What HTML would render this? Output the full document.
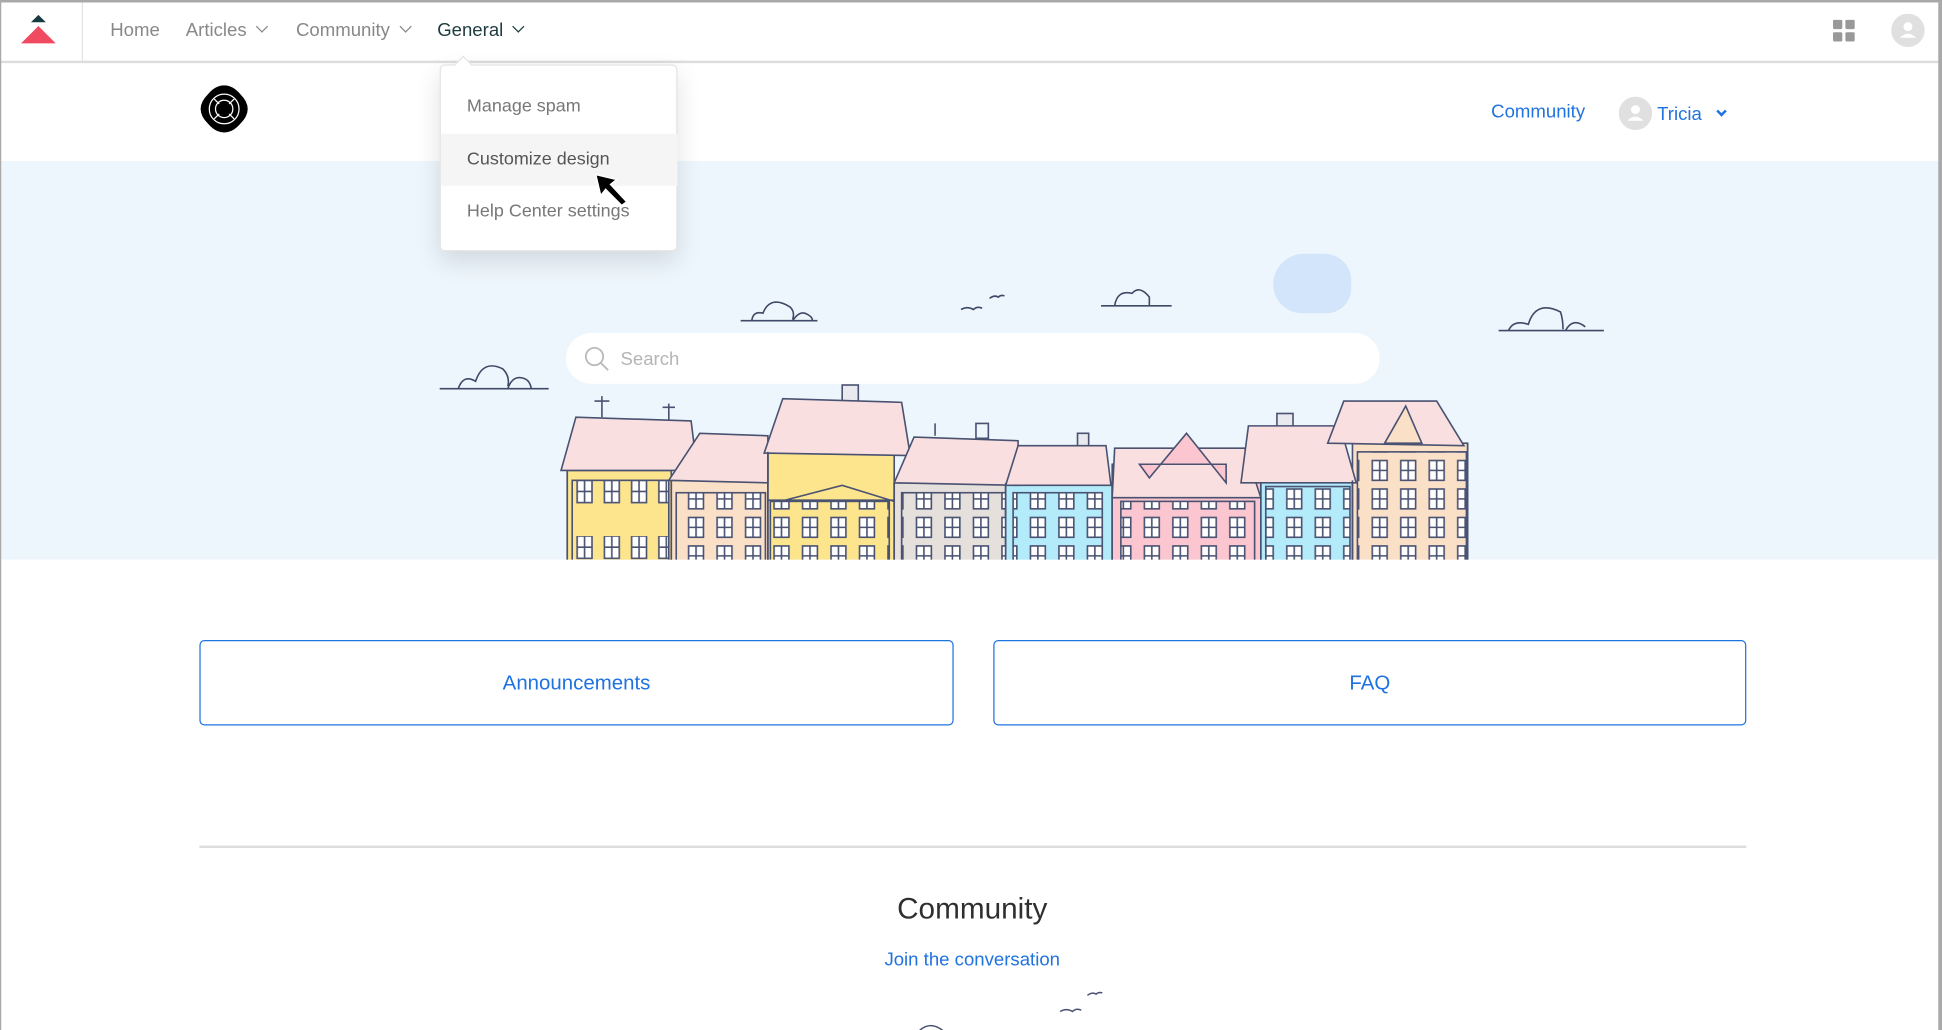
<!DOCTYPE html>
<html><head><meta charset="utf-8"><style>
*{margin:0;padding:0;box-sizing:border-box}
html,body{width:1942px;height:1030px;overflow:hidden;background:#fff;font-family:"Liberation Sans",sans-serif}
#s{position:absolute;left:0;top:0;width:1568px;height:832px;transform:scale(1.23852,1.238);transform-origin:0 0;overflow:hidden;background:#fff}
.a{position:absolute}
.nav{font-size:15px;color:#888;top:16px}
.chev{display:inline-block;width:7px;height:7px;border-right:1.5px solid #888;border-bottom:1.5px solid #888;transform:rotate(45deg);margin-left:9px;position:relative;top:-4px}
.card{position:absolute;top:517px;height:69px;border:1.5px solid #1f73e0;border-radius:4px;color:#1f73e0;font-size:16.5px;text-align:center;line-height:68px}
.dd{font-size:14.5px;color:#777;left:0;width:191px;padding-left:21px;height:42px;line-height:42px}
</style></head><body><div id="s">
<div class="a" style="left:0;top:0;width:1568px;height:51px;border-bottom:2px solid #ddd"></div>
<div class="a" style="left:66px;top:0;width:1px;height:49px;background:#e3e3e3"></div>
<svg class="a" style="left:14px;top:11px" width="34" height="26"><polygon points="17,1 23,7 11,7" fill="#173b40"/><polygon points="17,10 31,24 3,24" fill="#ef4a62"/></svg>
<div class="a nav" style="left:89px">Home</div>
<div class="a nav" style="left:150px">Articles<span class="chev"></span></div>
<div class="a nav" style="left:239px">Community<span class="chev"></span></div>
<div class="a nav" style="left:353px;color:#1e3c40">General<span class="chev" style="border-color:#1e3c40"></span></div>
<svg class="a" style="left:1480px;top:16px" width="18" height="18"><rect x="0" y="0" width="7.5" height="7.5" rx="1" fill="#999"/><rect x="10" y="0" width="7.5" height="7.5" rx="1" fill="#999"/><rect x="0" y="10" width="7.5" height="7.5" rx="1" fill="#999"/><rect x="10" y="10" width="7.5" height="7.5" rx="1" fill="#999"/></svg>
<svg class="a" style="left:1527px;top:11px" width="27" height="27"><circle cx="13.5" cy="13.5" r="13.5" fill="#e0e0e0"/><circle cx="13.5" cy="10.5" r="3.6" fill="#fff"/><path d="M7 19.5 Q13.5 13 20 19.5 Z" fill="#fff"/></svg>
<svg class="a" style="left:160px;top:67px" width="42" height="42" viewBox="0 0 42 42"><path d="M21 2 Q28 2 34 9 Q40 15 40 21 Q40 27 34 33 Q28 40 21 40 Q14 40 8 33 Q2 27 2 21 Q2 15 8 9 Q14 2 21 2Z" fill="#000"/><circle cx="21" cy="21" r="12" fill="none" stroke="#fff" stroke-width="1"/><circle cx="21" cy="21" r="7" fill="none" stroke="#fff" stroke-width="1"/><path d="M13 13l4 4M29 13l-4 4M13 29l4-4M29 29l-4-4" stroke="#fff"/></svg>
<div class="a" style="left:1204px;top:82px;font-size:15px;color:#1f73e0">Community</div>
<svg class="a" style="left:1307px;top:78px" width="27" height="27"><circle cx="13.5" cy="13.5" r="13.5" fill="#e0e0e0"/><circle cx="13.5" cy="10.5" r="3.6" fill="#fff"/><path d="M7 19.5 Q13.5 13 20 19.5 Z" fill="#fff"/></svg>
<div class="a" style="left:1338px;top:84px;font-size:15px;color:#1f73e0">Tricia<span class="chev" style="border-color:#1f73e0;margin-left:13px;width:6px;height:6px;border-width:2px"></span></div>
<div class="a" style="left:0;top:130px;width:1568px;height:322px;background:#eef6fd"></div>
<div class="a" style="left:1028px;top:205px;width:63px;height:48px;border-radius:30px 26px 24px 28px;background:#d3e5fa"></div>
<svg class="a" style="left:0;top:130px" width="1568" height="322" fill="none" stroke="#3e4a66" stroke-width="1.3">
<path d="M355 184H443M370 184Q374 172 384 178Q390 160 406 168Q412 174 410 182M410 184Q414 172 424 176Q428 178 429 184"/>
<path d="M598 129H660M607 129Q608 121 616 123Q622 108 638 118Q642 122 640 128M640 129Q646 120 652 124Q656 126 656 129"/>
<path d="M889 117H946M900 117Q902 104 914 107Q920 100 928 110V117"/>
<path d="M1210 137H1295M1218 137Q1222 128 1234 132Q1240 112 1260 122Q1262 128 1262 136M1264 137Q1270 126 1280 134"/>
<path d="M776 120Q781 117 786 120Q789 117 793 119M799 111Q803 108 806 110Q808 108 811 109"/>
</svg>
<div class="a" style="left:457px;top:269px;width:657px;height:41px;background:#fff;border-radius:21px"></div>
<svg class="a" style="left:471px;top:279px" width="22" height="22" fill="none" stroke="#bbb" stroke-width="1.5"><circle cx="9" cy="9" r="7"/><path d="M14 14l6 6"/></svg>
<div class="a" style="left:501px;top:282px;font-size:15px;color:#b5b5b5">Search</div>
<svg class="a" style="left:0;top:0" width="1568" height="452" stroke="#4a5272" stroke-width="1.3">
<defs>
<pattern id="w" x="0" y="388" width="22" height="45" patternUnits="userSpaceOnUse"><rect x="4" y="0" width="12" height="18" fill="#fff" stroke="#4a5272"/><path d="M10 0V18M4 9H16" stroke="#4a5272"/></pattern>
<pattern id="w2" x="0" y="0" width="23" height="23" patternUnits="userSpaceOnUse"><rect x="4" y="4" width="12" height="16" fill="#fff" stroke="#4a5272"/><path d="M10 4V20M4 12H16" stroke="#4a5272"/></pattern>
</defs>
<path d="M486 320V337M480 324H492M540 326V340M535 329H545M755 342V352M788 342h10v12h-10z" fill="none"/>
<rect x="680" y="311" width="13" height="20" fill="#e8eaf0"/>
<rect x="1031" y="334" width="13" height="12" fill="#e8eaf0"/>
<rect x="870" y="350" width="9" height="12" fill="#e8eaf0"/>
<rect x="458" y="380" width="84" height="80" fill="#fde58e"/>
<rect x="542" y="388" width="78" height="72" fill="#fbe0c8"/>
<rect x="620" y="365" width="102" height="95" fill="#fde58e"/>
<rect x="722" y="390" width="90" height="70" fill="#e6e0dc"/>
<rect x="812" y="390" width="86" height="70" fill="#b3ebfb"/>
<rect x="898" y="375" width="120" height="85" fill="#fbc6d0"/>
<rect x="1018" y="388" width="74" height="72" fill="#b3ebfb"/>
<rect x="1092" y="358" width="93" height="102" fill="#fbe0c8"/>
<polygon points="453,380 465,337 558,340 563,380" fill="#f9dfe0"/>
<polygon points="540,388 565,350 620,352 620,390" fill="#f9dfe0"/>
<polygon points="617,366 632,322 728,325 735,368" fill="#f9dfe0"/>
<polygon points="722,390 738,353 822,356 822,392" fill="#f9dfe0"/>
<polygon points="812,392 822,360 893,360 897,392" fill="#f9dfe0"/>
<polygon points="898,402 900,362 1005,362 1018,402" fill="#f9dfe0"/>
<polygon points="928,386 958,350 990,390 990,375 920,375" fill="#fbc6d0"/>
<polygon points="1002,390 1008,344 1082,344 1095,390" fill="#f9dfe0"/>
<polygon points="1072,358 1085,324 1160,324 1182,360" fill="#f9dfe0"/>
<polygon points="1118,358 1135,328 1148,358" fill="#fbe0c8"/>
<rect x="462" y="388" width="78" height="72" fill="url(#w)"/>
<rect x="546" y="398" width="72" height="62" fill="url(#w2)"/>
<rect x="622" y="405" width="96" height="55" fill="url(#w2)"/>
<rect x="728" y="398" width="84" height="62" fill="url(#w2)"/>
<rect x="818" y="398" width="72" height="62" fill="url(#w2)"/>
<rect x="905" y="405" width="108" height="55" fill="url(#w2)"/>
<rect x="1022" y="393" width="68" height="67" fill="url(#w2)"/>
<rect x="1096" y="365" width="88" height="95" fill="url(#w2)"/>
<path d="M634 404L680 392L722 405M620 404H722" fill="none"/>
<path d="M458 380V452M542 388V452M620 365V452M722 390V452M812 390V452M898 392V452M1018 390V452M1092 388V452M1185 358V452" fill="none"/>
</svg>
<div class="a" style="left:355px;top:52px;width:192px;height:151px;background:#fff;border:1px solid #e4e4e4;border-radius:4px;box-shadow:0 8px 20px rgba(0,0,0,.12)">
<div class="a" style="left:13px;top:-6px;width:10px;height:10px;background:#fff;border-left:1px solid #e4e4e4;border-top:1px solid #e4e4e4;transform:rotate(45deg)"></div>
<div class="a dd" style="top:12px">Manage spam</div>
<div class="a dd" style="top:55px;background:#f5f5f5;color:#555">Customize design</div>
<div class="a dd" style="top:97px">Help Center settings</div>
</div>
<svg class="a" style="left:478px;top:139px" width="32" height="30"><path d="M3 2L20 6L15 10L28 24L24 27L11 14L7 19Z" fill="#000" stroke="#fff" stroke-width="1.2"/></svg>
<div class="card" style="left:161px;width:609px">Announcements</div>
<div class="card" style="left:802px;width:608px">FAQ</div>
<div class="a" style="left:161px;top:683px;width:1249px;height:2px;background:#ddd"></div>
<div class="a" style="left:0;width:1568px;top:721px;text-align:center;font-size:24px;color:#2f2f2f;padding-left:2px">Community</div>
<div class="a" style="left:0;width:1568px;top:767px;text-align:center;font-size:15px;color:#1f73e0;padding-left:2px">Join the conversation</div>
<svg class="a" style="left:730px;top:795px" width="170" height="40" fill="none" stroke="#4a5272" stroke-width="1.2"><path d="M126 22Q131 19 136 22Q139 19 143 21M148 9Q152 6 155 8Q157 6 160 7"/><path d="M10 40Q20 28 32 38"/></svg>
<div class="a" style="left:0;top:0;width:1568px;height:840px;border:2px solid #a9a9a9;border-width:2px 3px 0 1.5px"></div>
</div></body></html>
